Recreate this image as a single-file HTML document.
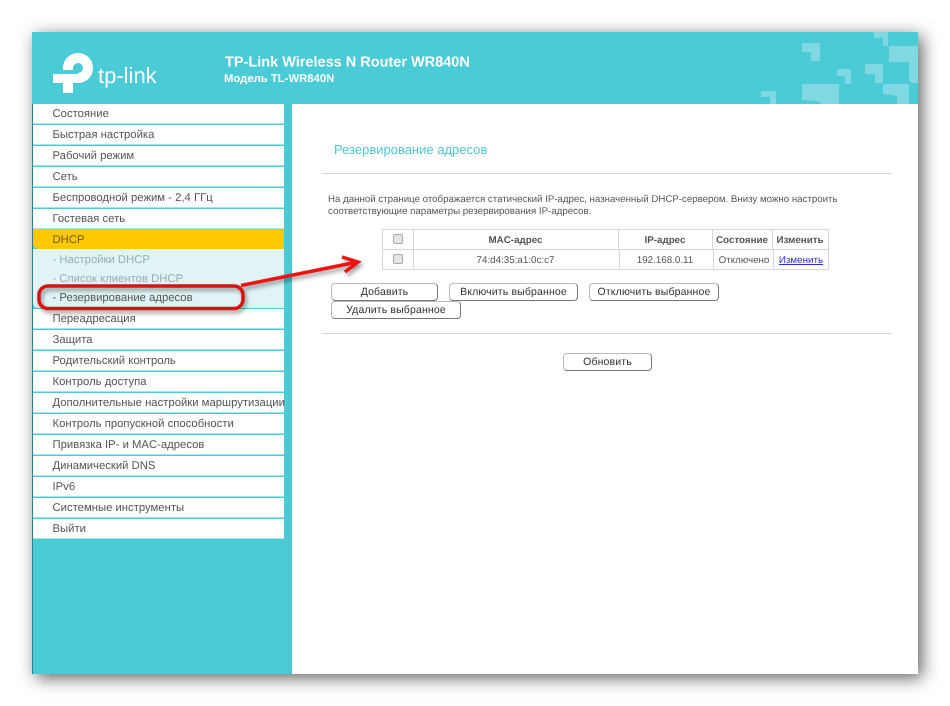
<!DOCTYPE html>
<html lang="ru">
<head>
<meta charset="utf-8">
<title>TP-Link</title>
<style>
html,body{margin:0;padding:0;width:950px;height:706px;background:#fff;overflow:hidden}
body{font-family:"Liberation Sans",Arial,sans-serif;position:relative;color:#555;text-rendering:geometricPrecision}
#panel{position:absolute;left:32px;top:32px;width:886px;height:642px;background:#4acbd6;box-shadow:4px 4px 16px rgba(0,0,0,.62);}
#edge{position:absolute;left:32px;top:104px;width:1px;height:570px;background:#2a7f88}
#main{position:absolute;left:292px;top:104px;width:626px;height:570px;background:#fff}
.a{position:absolute;white-space:nowrap}
.r{position:absolute;left:33px;width:251px;height:20px;line-height:21.6px;background:#fff;font-size:11.3px;color:#555;white-space:nowrap;text-indent:19.5px;box-shadow:inset 0 -1px 0 #a5e5eb}
.s{background:none;color:#93aeb2;box-shadow:none}
.btn{position:absolute;box-sizing:border-box;height:18px;line-height:17px;text-align:center;font-size:10.5px;color:#333;background:#fff;border:1px solid #bbb;border-right-color:#777;border-bottom-color:#777;border-radius:4px;letter-spacing:.15px}
.c{position:absolute;box-sizing:border-box;width:10px;height:10px;border:1px solid #aaa;border-radius:2px;background:#e4e4e4}
.t{position:absolute;text-align:center;font-size:9.8px;height:20px;line-height:20px;color:#555}
.v{position:absolute;width:1px;background:#d6d6d6}
.h{position:absolute;height:1px;background:#d6d6d6}
</style>
</head>
<body>
<div id="panel"></div>
<div id="edge"></div>

<svg class="a" style="left:0;top:0" width="950" height="706" viewBox="0 0 950 706">
  <g fill="#7fd8e2">
    <polygon points="874,32 888,32 888,46 883,46 883,38 874,38"/>
    <polygon points="802,43 820,43 820,61 811,61 811,52 802,52"/>
    <polygon points="837,69 851,69 851,84 845,84 845,76 837,76"/>
    <polygon points="865,64 883,64 883,83 875,83 875,74 865,74"/>
    <polygon points="883,84 909,84 909,104 897,104 897,96 883,94"/>
    <polygon points="889,46 918,46 918,83 911,83 909,80 909,62 889,62"/>
    <polygon points="802,84 839,84 839,104 822,104 818,101 802,100"/>
    <polygon points="761,91 776,91 776,104 770,104 770,97 761,97"/>
  </g>
  <path d="M68 70V68A10 10 0 1 1 78 78" fill="none" stroke="#fff" stroke-width="10"/>
  <rect x="53" y="74" width="26" height="9" fill="#fff"/>
  <rect x="63" y="74" width="10" height="19" fill="#fff"/>
  <text x="98" y="83" font-family="Liberation Sans, sans-serif" font-size="22" fill="#fff">tp-link</text>
  <text x="225" y="66.500" font-family="Liberation Sans, sans-serif" font-size="14.500" font-weight="700" fill="#fff">TP-Link Wireless N Router WR840N</text>
  <text x="224" y="82" font-family="Liberation Sans, sans-serif" font-size="11.300" font-weight="700" fill="#fff">Модель TL-WR840N</text>
</svg>

<div id="main"></div>

<div class="r" style="top:104px">Состояние</div>
<div class="r" style="top:125px">Быстрая настройка</div>
<div class="r" style="top:146px">Рабочий режим</div>
<div class="r" style="top:167px">Сеть</div>
<div class="r" style="top:188px">Беспроводной режим - 2,4 ГГц</div>
<div class="r" style="top:209px">Гостевая сеть</div>
<div class="a" style="left:33px;top:249px;width:251px;height:59px;background:#e0f4f6;border-bottom-left-radius:5px"></div>
<div class="r" style="top:229px;background:#fdc800;border-bottom-left-radius:6px;color:#6b5a1c;box-shadow:none;line-height:23px">DHCP</div>
<div class="r s" style="top:249px;line-height:22.500px">- Настройки DHCP</div>
<div class="r s" style="top:268px;line-height:22.500px">- Список клиентов DHCP</div>
<div class="r s" style="top:287px;line-height:22.500px;color:#555">- Резервирование адресов</div>
<div class="r" style="top:309px">Переадресация</div>
<div class="r" style="top:330px">Защита</div>
<div class="r" style="top:351px">Родительский контроль</div>
<div class="r" style="top:372px">Контроль доступа</div>
<div class="r" style="top:393px">Дополнительные настройки маршрутизации</div>
<div class="r" style="top:414px">Контроль пропускной способности</div>
<div class="r" style="top:435px">Привязка IP- и MAC-адресов</div>
<div class="r" style="top:456px">Динамический DNS</div>
<div class="r" style="top:477px">IPv6</div>
<div class="r" style="top:498px">Системные инструменты</div>
<div class="r" style="top:519px">Выйти</div>

<div class="a" style="left:334px;top:141px;font-size:13px;line-height:17px;color:#4fc6d2">Резервирование адресов</div>
<div class="h" style="left:322px;top:173px;width:569px;background:#d4d4d4"></div>
<div class="a" style="left:328px;top:194px;font-size:9.7px;line-height:11.500px;color:#555">На данной странице отображается статический IP-адрес, назначенный DHCP-сервером. Внизу можно настроить<br>соответствующие параметры резервирования IP-адресов.</div>

<div class="h" style="left:382px;top:229px;width:447px"></div>
<div class="h" style="left:382px;top:249px;width:447px"></div>
<div class="h" style="left:382px;top:269px;width:447px"></div>
<div class="v" style="left:382px;top:229px;height:41px"></div>
<div class="v" style="left:413px;top:229px;height:41px"></div>
<div class="v" style="left:618px;top:229px;height:20px"></div>
<div class="v" style="left:712px;top:229px;height:20px"></div>
<div class="v" style="left:772px;top:229px;height:20px"></div>
<div class="v" style="left:619px;top:249px;height:21px"></div>
<div class="v" style="left:713px;top:249px;height:21px"></div>
<div class="v" style="left:773px;top:249px;height:21px"></div>
<div class="v" style="left:828px;top:229px;height:41px"></div>
<div class="c" style="left:393px;top:234px"></div>
<div class="c" style="left:393px;top:254px"></div>
<div class="t" style="left:413px;top:231px;width:205px;font-weight:700">MAC-адрес</div>
<div class="t" style="left:618px;top:231px;width:94px;font-weight:700">IP-адрес</div>
<div class="t" style="left:712px;top:231px;width:60px;font-weight:700">Состояние</div>
<div class="t" style="left:772px;top:231px;width:56px;font-weight:700">Изменить</div>
<div class="t" style="left:413px;top:251px;width:205px">74:d4:35:a1:0c:c7</div>
<div class="t" style="left:618px;top:251px;width:94px">192.168.0.11</div>
<div class="t" style="left:714px;top:251px;width:60px">Отключено</div>
<div class="t" style="left:773px;top:251px;width:56px;color:#2a2ad8;text-decoration:underline">Изменить</div>

<div class="btn" style="left:331px;top:283px;width:107px">Добавить</div>
<div class="btn" style="left:449px;top:283px;width:129px">Включить выбранное</div>
<div class="btn" style="left:589px;top:283px;width:130px">Отключить выбранное</div>
<div class="btn" style="left:331px;top:301px;width:130px">Удалить выбранное</div>
<div class="h" style="left:322px;top:333px;width:569px;background:#d4d4d4"></div>
<div class="btn" style="left:563px;top:353px;width:89px">Обновить</div>

<svg class="a" style="left:0;top:0;filter:drop-shadow(2px 3px 2px rgba(0,0,0,.4))" width="950" height="706" viewBox="0 0 950 706">
  <rect x="39" y="286" width="204" height="22.500" rx="9" fill="none" stroke="#dc1212" stroke-width="3.500"/>
  <path d="M241 285.500L355 262.500" fill="none" stroke="#ee1212" stroke-width="3.500"/>
  <path d="M342 257L358 262L345 272" fill="none" stroke="#ee1212" stroke-width="3.500" stroke-linejoin="miter"/>
</svg>
</body>
</html>
